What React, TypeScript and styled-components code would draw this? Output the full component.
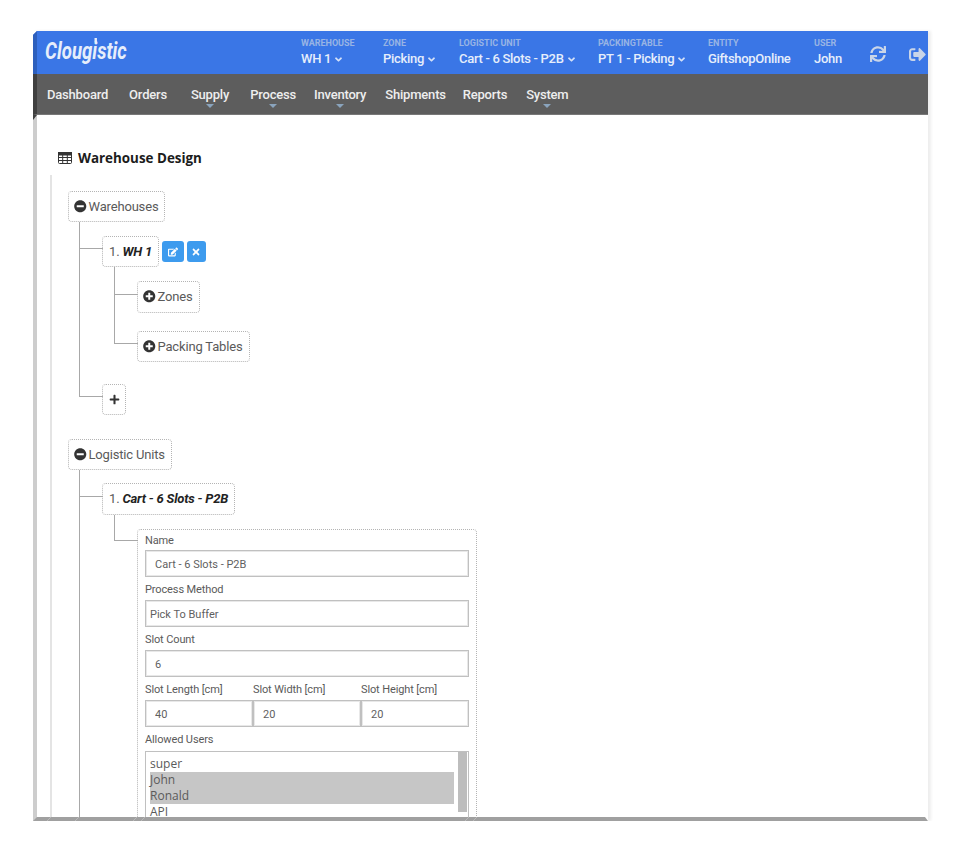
import React from 'react';
import styled, { createGlobalStyle } from 'styled-components';
import {
  FaAngleDown,
  FaEdit,
  FaMinusCircle,
  FaPlus,
  FaPlusCircle,
  FaSignOutAlt,
  FaSync,
  FaTimes,
} from 'react-icons/fa';

const GlobalStyle = createGlobalStyle`
  * { box-sizing: border-box; }
  html, body { margin: 0; padding: 0; background: #fff; }
  body { font-family: Roboto, "Liberation Sans", sans-serif; }
`;

const Frame = styled.div`
  position: relative;
  display: flex;
  flex-direction: column;
  width: 895px;
  height: 790px;
  margin: 31px 0 0 33px;
  box-shadow: 3px 0 3px #eee;
`;

const Header = styled.header`
  display: flex;
  align-items: flex-start;
  height: 43px;
  flex: none;
  background: #3a76e6;
  border-left: 4px solid #2d5fbd;
  clip-path: polygon(0 4px, 4px 0, 100% 0, 100% 100%, 0 100%);
`;

const Logo = styled.div`
  width: 264px;
  padding: 7px 0 0 10px;
  font-size: 23px;
  line-height: 28px;
  font-weight: 700;
  font-style: italic;
  color: #e6eefb;
  transform: scaleX(0.81);
  transform-origin: left center;
  white-space: nowrap;
`;

const LogoDot = styled.span`
  position: relative;

  &::before {
    content: '';
    position: absolute;
    left: 3px;
    top: 0;
    width: 3px;
    height: 4px;
    background: #e6eefb;
  }
`;

const Selector = styled.div<{ $w: number }>`
  width: ${(p) => p.$w}px;
  flex: none;
  padding-top: 7px;
`;

const SelectorLabel = styled.div`
  font-size: 9px;
  line-height: 11px;
  font-weight: 700;
  color: #98b4e4;
  white-space: nowrap;
`;

const SelectorValue = styled.div`
  display: flex;
  align-items: center;
  gap: 2px;
  margin-top: 2px;
  font-size: 13px;
  line-height: 16px;
  font-weight: 500;
  letter-spacing: -0.3px;
  color: #e6eefb;
  white-space: nowrap;

  svg {
    font-size: 11px;
    color: #d5e1f7;
  }
`;

const HeaderIcon = styled.div<{ $w: number; $size: number }>`
  width: ${(p) => p.$w}px;
  flex: none;
  padding-top: 15px;
  font-size: ${(p) => p.$size}px;
  line-height: 16px;
  color: #c9d5e8;
`;

const Nav = styled.nav`
  position: relative;
  display: flex;
  height: 41px;
  flex: none;
  padding-left: 10px;
  background: #5d5d5d;
  border-left: 4px solid #3f3f3f;
  border-bottom: 1px solid #787878;

  &::after {
    content: '';
    position: absolute;
    left: -4px;
    top: 41px;
    border-top: 5px solid #3f3f3f;
    border-right: 4px solid transparent;
  }
`;

const NavItem = styled.div<{ $gap: number; $caret?: boolean }>`
  position: relative;
  margin-right: ${(p) => p.$gap}px;
  padding-top: 13px;
  font-size: 13px;
  line-height: 15px;
  font-weight: 500;
  letter-spacing: -0.2px;
  color: #eee;
  white-space: nowrap;

  &::after {
    content: '';
    display: ${(p) => (p.$caret ? 'block' : 'none')};
    position: absolute;
    left: 50%;
    top: 30px;
    margin-left: -4px;
    border-top: 4px solid #8aa4bd;
    border-left: 4px solid transparent;
    border-right: 4px solid transparent;
  }
`;

const Body = styled.main`
  flex: 1;
  min-height: 0;
  overflow: hidden;
  background: #fff;
  border-left: 4px solid #cdcdcd;
  border-right: 3px solid #fff;
  border-bottom: 4px solid #a0a0a0;
`;

const BottomTicks = styled.svg`
  position: absolute;
  left: 0;
  bottom: 0;
`;

const Title = styled.h1`
  display: flex;
  align-items: center;
  gap: 6px;
  height: 18px;
  margin: 34px 0 0 21px;
  font-family: 'Open Sans', sans-serif;
  font-size: 13.4px;
  font-weight: 700;
  color: #1c1c1c;
`;

const Tree = styled.div`
  margin: 8px 0 0 13px;
  padding: 16px 0 0 16px;
  border-left: 2px solid #e4e4e4;
`;

const Branch = styled.ul<{ $indent: number }>`
  margin: 0 0 0 ${(p) => p.$indent}px;
  padding: 0 0 0 23px;
  list-style: none;
`;

const RootList = styled.ul`
  margin: 0;
  padding: 0;
  list-style: none;
`;

const RootItem = styled.li<{ $top?: number }>`
  padding-top: ${(p) => p.$top ?? 0}px;
`;

const Item = styled.li<{ $top: number; $elbow: number; $more?: boolean }>`
  position: relative;
  padding-top: ${(p) => p.$top}px;

  &::before {
    content: '';
    position: absolute;
    left: -23px;
    top: 0;
    width: 23px;
    height: ${(p) => p.$elbow}px;
    border-left: 1px solid #a8a8a8;
    border-bottom: 1px solid #a8a8a8;
  }

  &::after {
    content: '';
    display: ${(p) => (p.$more ? 'block' : 'none')};
    position: absolute;
    left: -23px;
    top: 0;
    bottom: 0;
    border-left: 1px solid #a8a8a8;
  }
`;

const NodeRow = styled.div`
  display: flex;
  align-items: center;
  gap: 3px;
`;

const Node = styled.div<{ $tall?: boolean }>`
  display: inline-flex;
  align-items: center;
  gap: 2px;
  height: ${(p) => (p.$tall ? 32 : 31)}px;
  padding: 0 6px 0 5px;
  padding-bottom: ${(p) => (p.$tall ? 1 : 0)}px;
  border: 1px dotted #b4b4b4;
  border-radius: 4px;
  background: #fff;
  font-size: 13px;
  letter-spacing: -0.17px;
  color: #5a5a5a;
  white-space: nowrap;

  svg {
    font-size: 12.5px;
    color: #333;
  }
`;

const AddNode = styled(Node)`
  justify-content: center;
  width: 24px;
  padding: 0;

  svg {
    font-size: 11px;
  }
`;

const IndexNode = styled(Node)`
  padding-right: 6px;
  padding-left: 6px;
`;

const NodeName = styled.b`
  font-style: italic;
  font-weight: 700;
  letter-spacing: -0.2px;
  color: #222;
  margin-left: 1px;
`;

const IconButton = styled.button<{ $w: number }>`
  display: flex;
  align-items: center;
  justify-content: center;
  width: ${(p) => p.$w}px;
  height: 21px;
  padding: 0;
  border: 0;
  border-radius: 3px;
  background: #3d9bee;
  color: #fff;
  font-size: 10px;
`;

const FormBox = styled.div`
  width: 340px;
  padding: 0 7px;
  border: 1px dotted #b4b4b4;
  border-radius: 4px;
  background: #fff;
`;

const FieldLabel = styled.label`
  display: block;
  height: 23px;
  padding-top: 6px;
  font-size: 11px;
  line-height: 13px;
  letter-spacing: -0.12px;
  color: #5a5a5a;
  white-space: nowrap;
`;

const FirstLabel = styled(FieldLabel)`
  height: 20px;
  padding-top: 4px;
`;

const TextField = styled.input<{ $pad?: number }>`
  display: block;
  width: 100%;
  height: 27px;
  padding: 1px 0 0 ${(p) => p.$pad ?? 9}px;
  border: 1px solid #c0c0c0;
  box-shadow: inset 0 0 0 1px #e8e8e8;
  outline: 0;
  background: #fff;
  font-family: Roboto, sans-serif;
  font-size: 11px;
  color: #5f5f5f;
`;

const TripleRow = styled.div`
  display: grid;
  grid-template-columns: repeat(3, 108px);
`;

const UserList = styled.div`
  display: flex;
  justify-content: space-between;
  height: 90px;
  margin-top: 1px;
  padding: 0 1px 0 4px;
  border: 1px solid #c0c0c0;
`;

const UserOptions = styled.div`
  width: 304px;
  padding-top: 4px;
`;

const UserOption = styled.div<{ $selected?: boolean }>`
  height: 16px;
  font-family: 'Open Sans', sans-serif;
  font-size: 12px;
  line-height: 16px;
  color: #5a5a5a;
  background: ${(p) => (p.$selected ? '#c6c6c6' : 'transparent')};
`;

const ScrollThumb = styled.div`
  width: 9px;
  height: 60px;
  background: #bdbdbd;
`;

const TableIcon = () => (
  <svg width="14" height="12" viewBox="0 0 14 12" fill="none" stroke="#333" strokeWidth="1">
    <rect x="0.5" y="0.5" width="13" height="11" rx="1" />
    <rect x="0.5" y="0.5" width="13" height="2.5" fill="#333" />
    <path d="M1 5.5h12M1 8.5h12M4.7 3v8M9.3 3v8" />
  </svg>
);

// x of the page lines that run on over the bottom edge of the frame
const tickXs = [18, 46, 104, 112, 436, 444];

const App: React.FC = () => {
  return (
    <>
      <GlobalStyle />
      <Frame>
        <Header>
          <Logo>Cloug<LogoDot>i</LogoDot>stic</Logo>
          <Selector $w={82}>
            <SelectorLabel>WAREHOUSE</SelectorLabel>
            <SelectorValue>WH 1 <FaAngleDown /></SelectorValue>
          </Selector>
          <Selector $w={76}>
            <SelectorLabel>ZONE</SelectorLabel>
            <SelectorValue>Picking <FaAngleDown /></SelectorValue>
          </Selector>
          <Selector $w={139}>
            <SelectorLabel>LOGISTIC UNIT</SelectorLabel>
            <SelectorValue>Cart - 6 Slots - P2B <FaAngleDown /></SelectorValue>
          </Selector>
          <Selector $w={110}>
            <SelectorLabel>PACKINGTABLE</SelectorLabel>
            <SelectorValue>PT 1 - Picking <FaAngleDown /></SelectorValue>
          </Selector>
          <Selector $w={106}>
            <SelectorLabel>ENTITY</SelectorLabel>
            <SelectorValue>GiftshopOnline</SelectorValue>
          </Selector>
          <Selector $w={56}>
            <SelectorLabel>USER</SelectorLabel>
            <SelectorValue>John</SelectorValue>
          </Selector>
          <HeaderIcon $w={39} $size={16}><FaSync /></HeaderIcon>
          <HeaderIcon $w={18} $size={17}><FaSignOutAlt /></HeaderIcon>
        </Header>
        <Nav>
          <NavItem $gap={21}>Dashboard</NavItem>
          <NavItem $gap={24}>Orders</NavItem>
          <NavItem $gap={21} $caret>Supply</NavItem>
          <NavItem $gap={18} $caret>Process</NavItem>
          <NavItem $gap={19} $caret>Inventory</NavItem>
          <NavItem $gap={17}>Shipments</NavItem>
          <NavItem $gap={19}>Reports</NavItem>
          <NavItem $gap={0} $caret>System</NavItem>
        </Nav>
        <Body>
          <Title><TableIcon />Warehouse Design</Title>
          <Tree>
            <RootList>
              <RootItem>
                <Node><FaMinusCircle />Warehouses</Node>
                <Branch $indent={11}>
                  <Item $top={14} $elbow={26} $more>
                    <NodeRow>
                      <IndexNode>1.<NodeName>WH 1</NodeName></IndexNode>
                      <IconButton $w={22}><FaEdit /></IconButton>
                      <IconButton $w={19}><FaTimes /></IconButton>
                    </NodeRow>
                    <Branch $indent={12}>
                      <Item $top={14} $elbow={27} $more>
                        <Node $tall><FaPlusCircle />Zones</Node>
                      </Item>
                      <Item $top={18} $elbow={30}>
                        <Node><FaPlusCircle />Packing Tables</Node>
                      </Item>
                    </Branch>
                  </Item>
                  <Item $top={22} $elbow={34}>
                    <AddNode><FaPlus /></AddNode>
                  </Item>
                </Branch>
              </RootItem>
              <RootItem $top={24}>
                <Node><FaMinusCircle />Logistic Units</Node>
                <Branch $indent={11}>
                  <Item $top={13} $elbow={26} $more>
                    <IndexNode $tall>1.<NodeName>Cart - 6 Slots - P2B</NodeName></IndexNode>
                    <Branch $indent={12}>
                      <Item $top={14} $elbow={25}>
                        <FormBox>
                          <FirstLabel>Name</FirstLabel>
                          <TextField readOnly defaultValue="Cart - 6 Slots - P2B" />
                          <FieldLabel>Process Method</FieldLabel>
                          <TextField readOnly $pad={4} defaultValue="Pick To Buffer" />
                          <FieldLabel>Slot Count</FieldLabel>
                          <TextField readOnly defaultValue="6" />
                          <TripleRow>
                            <FieldLabel>Slot Length [cm]</FieldLabel>
                            <FieldLabel>Slot Width [cm]</FieldLabel>
                            <FieldLabel>Slot Height [cm]</FieldLabel>
                            <TextField readOnly defaultValue="40" />
                            <TextField readOnly defaultValue="20" />
                            <TextField readOnly defaultValue="20" />
                          </TripleRow>
                          <FieldLabel>Allowed Users</FieldLabel>
                          <UserList>
                            <UserOptions>
                              <UserOption>super</UserOption>
                              <UserOption $selected>John</UserOption>
                              <UserOption $selected>Ronald</UserOption>
                              <UserOption>API</UserOption>
                            </UserOptions>
                            <ScrollThumb />
                          </UserList>
                        </FormBox>
                      </Item>
                    </Branch>
                  </Item>
                </Branch>
              </RootItem>
            </RootList>
          </Tree>
        </Body>
        <BottomTicks width="895" height="4" viewBox="0 0 895 4" stroke="#c4c4c4" strokeWidth="0.7">
          {tickXs.map((x) => (
            <line key={x} x1={x} y1={0} x2={x - 4} y2={4} />
          ))}
        </BottomTicks>
      </Frame>
    </>
  );
};

export default App;
